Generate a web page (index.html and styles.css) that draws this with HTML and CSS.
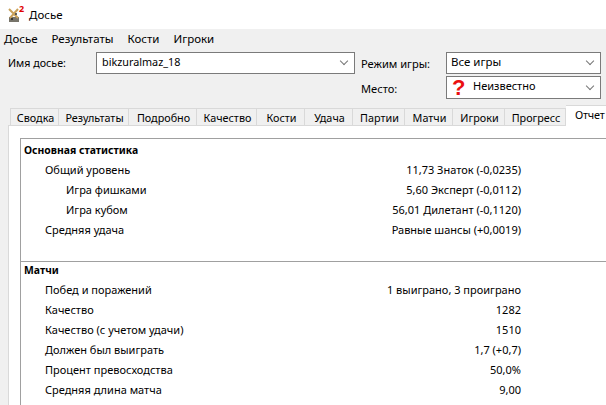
FILE: index.html
```html
<!DOCTYPE html>
<html lang="ru">
<head>
  <title>Досье</title>
  <meta charset="utf-8">
  <link rel="stylesheet" href="styles.css">
</head>
<body>
  <header class="titlebar">
    <svg class="app-icon" width="16" height="16" viewBox="0 0 16 16">
      <rect x="1" y="10" width="10" height="5" fill="#77746a"/>
      <path d="M1 2l9 9M10 2l-8 9" stroke="#c9a25a" stroke-width="2"/>
      <circle cx="4" cy="12" r="1" fill="#222"/>
      <circle cx="8" cy="7" r="1" fill="#333"/>
    </svg>
    <span class="app-badge">2</span>
    <span>Досье</span>
  </header>

  <div class="window">
    <nav class="menu">
      <span>Досье</span>
      <span>Результаты</span>
      <span>Кости</span>
      <span>Игроки</span>
    </nav>

    <form class="filters">
      <div class="name-col">
        <label class="name-label">Имя досье:</label>
        <div class="combo name-combo">bikzuralmaz_18<i class="chev"></i></div>
      </div>
      <div class="mode-col">
        <div class="mode-row">
          <label>Режим игры:</label>
          <div class="combo mode-combo">Все игры<i class="chev"></i></div>
        </div>
        <div class="mode-row">
          <label>Место:</label>
          <div class="combo mode-combo place-combo"><b class="question">?</b><span class="place-name">Неизвестно</span><i class="chev"></i></div>
        </div>
      </div>
    </form>

    <div class="tabs">
      <span class="tab">Сводка</span>
      <span class="tab">Результаты</span>
      <span class="tab">Подробно</span>
      <span class="tab">Качество</span>
      <span class="tab">Кости</span>
      <span class="tab">Удача</span>
      <span class="tab">Партии</span>
      <span class="tab">Матчи</span>
      <span class="tab">Игроки</span>
      <span class="tab">Прогресс</span>
      <span class="tab active">Отчет</span>
    </div>

    <main class="page">
      <div class="report">
        <section class="group">
          <h2>Основная статистика</h2>
          <div class="row lvl1"><span>Общий уровень</span><span>11,73 Знаток (-0,0235)</span></div>
          <div class="row lvl2"><span>Игра фишками</span><span>5,60 Эксперт (-0,0112)</span></div>
          <div class="row lvl2"><span>Игра кубом</span><span>56,01 Дилетант (-0,1120)</span></div>
          <div class="row lvl1"><span>Средняя удача</span><span>Равные шансы (+0,0019)</span></div>
        </section>
        <section class="group">
          <h2>Матчи</h2>
          <div class="row lvl1"><span>Побед и поражений</span><span>1 выиграно, 3 проиграно</span></div>
          <div class="row lvl1"><span>Качество</span><span>1282</span></div>
          <div class="row lvl1"><span>Качество (с учетом удачи)</span><span>1510</span></div>
          <div class="row lvl1"><span>Должен был выиграть</span><span>1,7 (+0,7)</span></div>
          <div class="row lvl1"><span>Процент превосходства</span><span>50,0%</span></div>
          <div class="row lvl1"><span>Средняя длина матча</span><span>9,00</span></div>
        </section>
      </div>
    </main>
  </div>
</body>
</html>
```

FILE: styles.css
```css
html, body {
  margin: 0;
  height: 405px;
  overflow: hidden;
}

body {
  background: #fff;
  color: #000;
  font-family: "Noto Sans", "Open Sans", sans-serif;
  font-size: 11.5px;
  line-height: 16px;
}

.titlebar {
  position: relative;
  display: flex;
  align-items: center;
  gap: 5px;
  height: 29px;
  padding-left: 8px;
  box-sizing: border-box;
}

.app-badge {
  position: absolute;
  left: 19px;
  top: 4px;
  color: #e00000;
  font-size: 9px;
  font-weight: bold;
  line-height: 9px;
}

.window {
  background: #f0f0f0;
  height: 376px;
  overflow: hidden;
}

.menu {
  display: flex;
  gap: 14px;
  padding: 2px 4px 0;
  height: 18px;
  box-sizing: border-box;
}

.filters {
  display: flex;
  height: 58px;
  padding-top: 5px;
  box-sizing: border-box;
  font-size: 11.1px;
}

.name-col {
  display: flex;
  align-items: flex-start;
  width: 361px;
  padding-left: 8px;
  box-sizing: border-box;
}

.name-label {
  width: 88px;
  padding-top: 3px;
  font-size: 10.7px;
}

.combo {
  display: flex;
  align-items: center;
  background: #fff;
  border: 1px solid #7a7a7a;
  box-sizing: border-box;
  padding: 0 7px 2px 4px;
}

.name-combo {
  width: 259px;
  height: 22px;
  padding-left: 5px;
  font-size: 10.8px;
}

.mode-col {
  display: flex;
  flex-direction: column;
  gap: 2px;
}

.mode-row {
  display: flex;
  align-items: center;
}

.mode-row label {
  width: 85px;
  padding-top: 2px;
}

.mode-combo {
  width: 155px;
  height: 22px;
  font-size: 11.5px;
}

.place-combo {
  height: 23px;
  padding-left: 5px;
  font-size: 11px;
}

.place-name {
  margin-top: -1px;
}

.question {
  width: 21px;
  color: #ea1010;
  font-family: "Liberation Sans", sans-serif;
  font-size: 22px;
  line-height: 20px;
  padding-top: 2px;
}

.chev {
  flex: none;
  width: 5px;
  height: 5px;
  margin: -2px 0 0 auto;
  border-right: 1px solid #777;
  border-bottom: 1px solid #777;
  transform: rotate(45deg);
}

.tabs {
  display: grid;
  grid-template-columns: 49px 70px 68px 60px 48px 48px 52px 48px 52px 61px 40px;
  align-items: end;
  height: 20px;
  padding-left: 10px;
  font-size: 10.8px;
  white-space: nowrap;
}

.tab {
  height: 17px;
  padding: 1px 0 0 2px;
  box-sizing: border-box;
  text-align: center;
  background: #f0f0f0;
  border: 1px solid #d9d9d9;
  border-left-width: 0;
  border-bottom: 0;
  overflow: hidden;
}

.tab:first-child {
  border-left-width: 1px;
}

.tab.active {
  position: relative;
  height: 21px;
  margin-bottom: -1px;
  padding: 1px 0 0 9px;
  text-align: left;
  background: #fff;
  border-right: 0;
  letter-spacing: -0.2px;
}

.page {
  background: #fff;
  margin-left: 8px;
  border-top: 1px solid #d9d9d9;
  border-left: 1px solid #d9d9d9;
  padding: 12px 0 0 11px;
  height: 300px;
  font-size: 11px;
}

.report {
  border: 1px solid #a0a0a0;
  border-right: 0;
}

.group {
  padding: 3px 85px 21px 3px;
}

.group + .group {
  padding-top: 0;
  border-top: 1px solid #a0a0a0;
}

.group h2 {
  margin: 0;
  font-size: 10.4px;
  font-weight: bold;
  height: 18px;
}

.row {
  display: flex;
  justify-content: space-between;
  height: 20px;
  line-height: 20px;
}

.lvl1 {
  padding-left: 21px;
}

.lvl2 {
  padding-left: 42px;
}
```
